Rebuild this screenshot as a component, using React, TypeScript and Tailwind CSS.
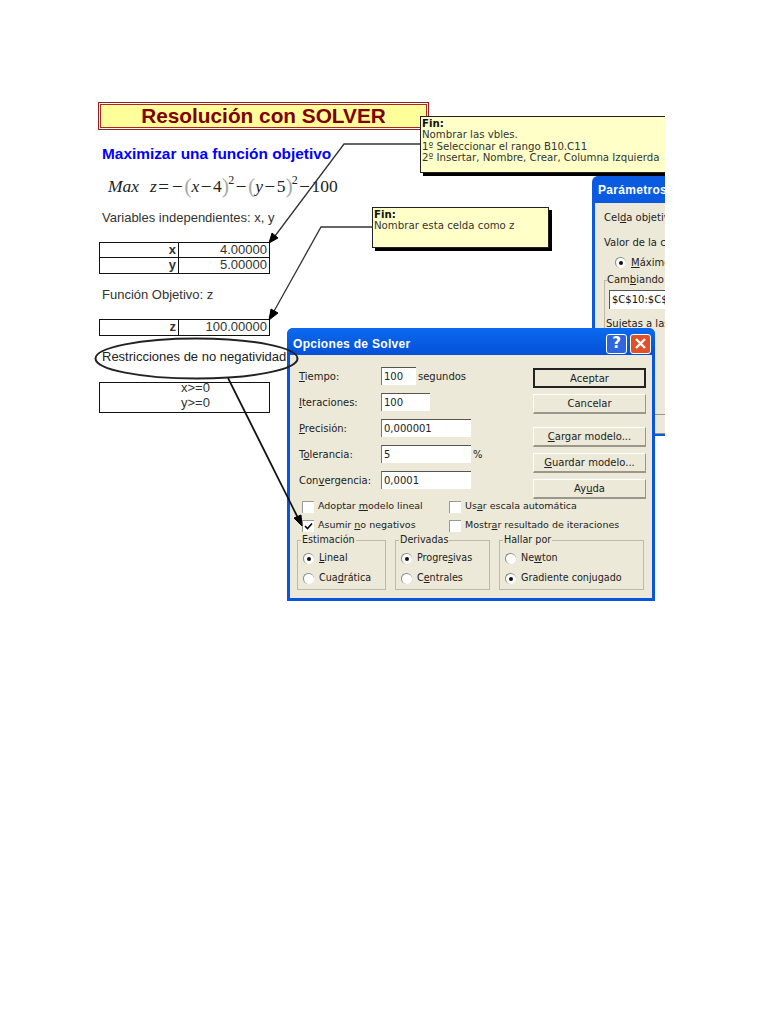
import React from "react";

const dlg = "[font-family:'DejaVu_Sans',sans-serif] text-[10px] text-[#222]";

function Note({ className, children }: { className: string; children: React.ReactNode }) {
  return (
    <div className={`absolute border border-[#222] bg-[#ffffc8] shadow-[3px_3px_0_#000] px-[1px] py-[1px] text-[10.2px] leading-[11.4px] text-[#333] whitespace-nowrap [font-family:'DejaVu_Sans',sans-serif] ${className}`}>
      {children}
    </div>
  );
}

function Field({ label, width, value, after }: { label: React.ReactNode; width: string; value: string; after?: string }) {
  return (
    <div className="flex items-center h-[18px]">
      <div className="w-[82px] whitespace-nowrap">{label}</div>
      <div className={`h-[18px] ${width} bg-white border-t border-l border-t-[#555] border-l-[#777] pl-[2px] leading-[17px]`}>{value}</div>
      {after && <div className="ml-[2px] whitespace-nowrap">{after}</div>}
    </div>
  );
}

function Btn({ children, strong }: { children: React.ReactNode; strong?: boolean }) {
  return (
    <div className={`w-[113px] h-[20px] flex items-center justify-center bg-[#ece9d8] ${strong ? "border-2 border-[#222]" : "border-b-2 border-r border-b-[#9a978a] border-r-[#9a978a] border-t border-l border-t-[#fff] border-l-[#fff]"}`}>
      {children}
    </div>
  );
}

function Check({ checked, children }: { checked?: boolean; children: React.ReactNode }) {
  return (
    <div className="flex items-center gap-[4px] h-[19px] whitespace-nowrap">
      <div className="w-[12px] h-[12px] bg-white border-t border-l border-[#999] shrink-0 flex items-center justify-center">
        {checked && (
          <svg width="9" height="8" viewBox="0 0 9 8"><path d="M1 4l2.5 2.5L8 1.5" stroke="#000" strokeWidth="1.6" fill="none" /></svg>
        )}
      </div>
      <span>{children}</span>
    </div>
  );
}

function Radio({ on, children }: { on?: boolean; children: React.ReactNode }) {
  return (
    <div className="flex items-center gap-[5px] h-[20px] whitespace-nowrap">
      <div className="w-[11px] h-[11px] rounded-full bg-white border-t border-l border-[#888] shrink-0 flex items-center justify-center">
        {on && <div className="w-[4px] h-[4px] rounded-full bg-[#111]" />}
      </div>
      <span>{children}</span>
    </div>
  );
}

function Group({ title, width, children }: { title: string; width: string; children: React.ReactNode }) {
  return (
    <div className={`relative h-[50px] ${width} border border-[#bdbaa8] pl-[5px] pt-[7px]`}>
      <div className="absolute left-[3px] -top-[7px] bg-[#ece9d8] px-[1px] leading-[12px] whitespace-nowrap">{title}</div>
      {children}
    </div>
  );
}

function Op({ children }: { children: React.ReactNode }) {
  return <span className="mx-[1.5px] text-[19px] leading-none">{children}</span>;
}

function Paren({ children }: { children: React.ReactNode }) {
  return <span className="text-[22px] leading-none font-light text-[#aaa]">{children}</span>;
}

function Sup() {
  return <span className="text-[12px] leading-none -ml-[1px] mb-[12px]">2</span>;
}

export default function App() {
  return (
    <div className="relative w-[768px] h-[1024px] bg-white overflow-hidden [font-family:'Liberation_Sans',Arial,sans-serif]">
      <div className="relative w-[665px] h-[1024px] overflow-hidden">
        {/* Sheet content, in flow */}
        <div className="pl-[98px] pt-[102px] w-[370px] text-[13px] text-[#222]">
          <div className="w-[331px] h-[28px] border border-[#a01c1c] p-[1px]">
            <div className="h-full border border-[#a52a2a] bg-[#ffff99] flex items-center justify-center text-[20.8px] font-bold text-[#800000]">
              Resolución con SOLVER
            </div>
          </div>
          <div className="mt-[15px] pl-[4px] text-[15.4px] leading-[18px] font-bold text-[#0000ff] whitespace-nowrap">Maximizar una función objetivo</div>
          <div className="mt-[11px] pl-[10px] h-[24px] flex items-center text-[17.5px] text-[#222] whitespace-nowrap [font-family:'Liberation_Serif',serif]">
            <i className="w-[42px]">Max</i>
            <i>z</i><Op>=</Op><Op>−</Op><Paren>(</Paren>
            <i>x</i><Op>−</Op><span>4</span><Paren>)</Paren>
            <Sup /><Op>−</Op><Paren>(</Paren>
            <i>y</i><Op>−</Op><span>5</span><Paren>)</Paren>
            <Sup /><Op>−</Op><span>100</span>
          </div>
          <div className="mt-[12px] pl-[4px] leading-[16px] text-[#333]">Variables independientes: x, y</div>
          <div className="mt-[16px] ml-[1px] w-[171px] border border-[#111] text-[13px] text-[#333]">
            <div className="flex h-[15px] leading-[14px] border-b border-[#111]">
              <div className="w-[79px] border-r border-[#111] text-right pr-[2px] font-bold">x</div>
              <div className="flex-1 text-right pr-[2px]">4.00000</div>
            </div>
            <div className="flex h-[15px] leading-[14px]">
              <div className="w-[79px] border-r border-[#111] text-right pr-[2px] font-bold">y</div>
              <div className="flex-1 text-right pr-[2px]">5.00000</div>
            </div>
          </div>
          <div className="mt-[13px] pl-[4px] leading-[16px] text-[#333]">Función Objetivo: z</div>
          <div className="mt-[16px] ml-[1px] w-[171px] h-[17px] border border-[#111] flex leading-[14px] text-[#333]">
            <div className="w-[79px] border-r border-[#111] text-right pr-[2px] font-bold">z</div>
            <div className="flex-1 text-right pr-[2px]">100.00000</div>
          </div>
          <div className="mt-[13px] pl-[4px] leading-[16px] whitespace-nowrap">Restricciones de no negatividad</div>
          <div className="mt-[17px] ml-[1px] w-[171px] h-[31px] border border-[#111] text-center leading-[15px] pl-[22px] text-[#333]">
            <div className="-mt-[3px]">x&gt;=0</div>
            <div>y&gt;=0</div>
          </div>
        </div>

        {/* Back dialog */}
        <div className="absolute left-[592px] top-[176px] w-[200px] h-[260px] rounded-t-[6px] bg-[#0a5be0] border-[3px] border-t-0 border-[#0a5be0]">
          <div className="h-[27px] pl-[3px] flex items-center text-[12px] tracking-[0.3px] font-bold text-white whitespace-nowrap">Parámetros de Solver</div>
          <div className={`relative h-[230px] bg-[#ece9d8] ${dlg} text-[10.5px] pl-[9px] pt-[7px]`}>
            <div className="h-[22px] whitespace-nowrap">Cel<u>d</u>a objetivo:</div>
            <div className="mt-[3px] h-[17px] whitespace-nowrap">Valor de la celda objetivo:</div>
            <div className="pl-[11px]"><Radio on><u>M</u>áximo</Radio></div>
            <div className="relative mt-[8px] h-[50px] border-t border-l border-[#bdbaa8] pl-[4px] pt-[9px]">
              <div className="absolute left-[2px] -top-[7px] bg-[#ece9d8] whitespace-nowrap leading-[12px]">Cam<u>b</u>iando las celdas:</div>
              <div className="h-[19px] w-[150px] bg-white border-t border-l border-[#555] pl-[2px] leading-[18px] text-[#111]">$C$10:$C$11</div>
            </div>
            <div className="absolute left-[11px] top-[113px] whitespace-nowrap">Su<u>j</u>etas a las siguientes</div>
            <div className="absolute left-[60px] top-[211px] w-[100px] h-[20px] border-y border-[#9a978a]" />
          </div>
        </div>

        <Note className="left-[420px] top-[116px] w-[270px] h-[57px]">
          <div className="font-bold text-[#111]">Fin:</div>
          <div>Nombrar las vbles.</div>
          <div>1º Seleccionar el rango B10.C11</div>
          <div>2º Insertar, Nombre, Crear, Columna Izquierda</div>
        </Note>
        <Note className="left-[372px] top-[207px] w-[177px] h-[41px]">
          <div className="font-bold text-[#111]">Fin:</div>
          <div>Nombrar esta celda como z</div>
        </Note>

        {/* Options dialog */}
        <div className={`absolute left-[287px] top-[328px] w-[368px] h-[273px] rounded-t-[6px] bg-[#0a55e0] px-[3px] pb-[3px] ${dlg}`}>
          <div className="h-[27px] flex items-center justify-between bg-gradient-to-b from-[#0c6af0] to-[#0550d8] rounded-t-[6px] -mx-[3px] pl-[6px] pr-[4px] pt-[4px]">
            <span className="text-[12px] font-bold text-white tracking-[0.3px] [font-family:'Liberation_Sans',sans-serif]">Opciones de Solver</span>
            <div className="flex gap-[3px]">
              <div className="w-[21px] h-[20px] rounded-[3px] border border-white bg-[#2f66e0] flex items-center justify-center text-white text-[15px] font-bold leading-none">?</div>
              <div className="w-[21px] h-[20px] rounded-[3px] border border-white bg-[#e0512a] flex items-center justify-center">
                <svg width="13" height="13" viewBox="0 0 13 13"><path d="M2 2l9 9M11 2l-9 9" stroke="#fff" strokeWidth="2.4" /></svg>
              </div>
            </div>
          </div>
          <div className="h-[243px] bg-[#ece9d8] pl-[9px] pt-[12px]">
            <div className="flex">
              <div className="w-[234px] flex flex-col gap-[8px]">
                <Field label={<><u>T</u>iempo:</>} width="w-[35px]" value="100" after="segundos" />
                <Field label={<><u>I</u>teraciones:</>} width="w-[49px]" value="100" />
                <Field label={<><u>P</u>recisión:</>} width="w-[90px]" value="0,000001" />
                <Field label={<>T<u>o</u>lerancia:</>} width="w-[90px]" value="5" after="%" />
                <Field label={<>Con<u>v</u>ergencia:</>} width="w-[90px]" value="0,0001" />
              </div>
              <div className="flex flex-col gap-[6px] mt-[1px]">
                <Btn strong>Aceptar</Btn>
                <Btn>Cancelar</Btn>
                <div className="h-px" />
                <Btn><u>C</u>argar modelo...</Btn>
                <Btn><u>G</u>uardar modelo...</Btn>
                <Btn>Ay<u>u</u>da</Btn>
              </div>
            </div>
            <div className="pl-[3px] grid grid-cols-[147px_1fr] text-[9.5px] -translate-y-[2px]">
              <Check>Adoptar <u>m</u>odelo lineal</Check>
              <Check>Us<u>a</u>r escala automática</Check>
              <Check checked>Asumir <u>n</u>o negativos</Check>
              <Check>Mostr<u>a</u>r resultado de iteraciones</Check>
            </div>
            <div className="mt-[3px] -ml-[2px] flex gap-[9px] text-[9.6px]">
              <Group title="Estimación" width="w-[89px]">
                <Radio on><u>L</u>ineal</Radio>
                <Radio>Cua<u>d</u>rática</Radio>
              </Group>
              <Group title="Derivadas" width="w-[95px]">
                <Radio on>Progre<u>s</u>ivas</Radio>
                <Radio>C<u>e</u>ntrales</Radio>
              </Group>
              <Group title="Hallar por" width="w-[145px]">
                <Radio>Ne<u>w</u>ton</Radio>
                <Radio on>Gradiente conjugado</Radio>
              </Group>
            </div>
          </div>
        </div>

        {/* Callout lines, ellipse, arrows */}
        <svg className="absolute left-0 top-0 pointer-events-none" width="665" height="1024" viewBox="0 0 665 1024" fill="none">
          <path d="M420 144H344L275 236" stroke="#333" strokeWidth="1.3" />
          <path d="M269 243l3-10 6 5z" fill="#000" stroke="#000" />
          <path d="M373 227H321L273 313" stroke="#333" strokeWidth="1.3" />
          <path d="M269 320l2-11 7 4z" fill="#000" stroke="#000" />
          <ellipse cx="196.5" cy="358.5" rx="101" ry="20" stroke="#222" strokeWidth="2" />
          <path d="M228 378L298 518" stroke="#111" strokeWidth="1.7" />
          <path d="M302 526l-8-8 7-3z" fill="#000" stroke="#000" />
        </svg>
      </div>
    </div>
  );
}
